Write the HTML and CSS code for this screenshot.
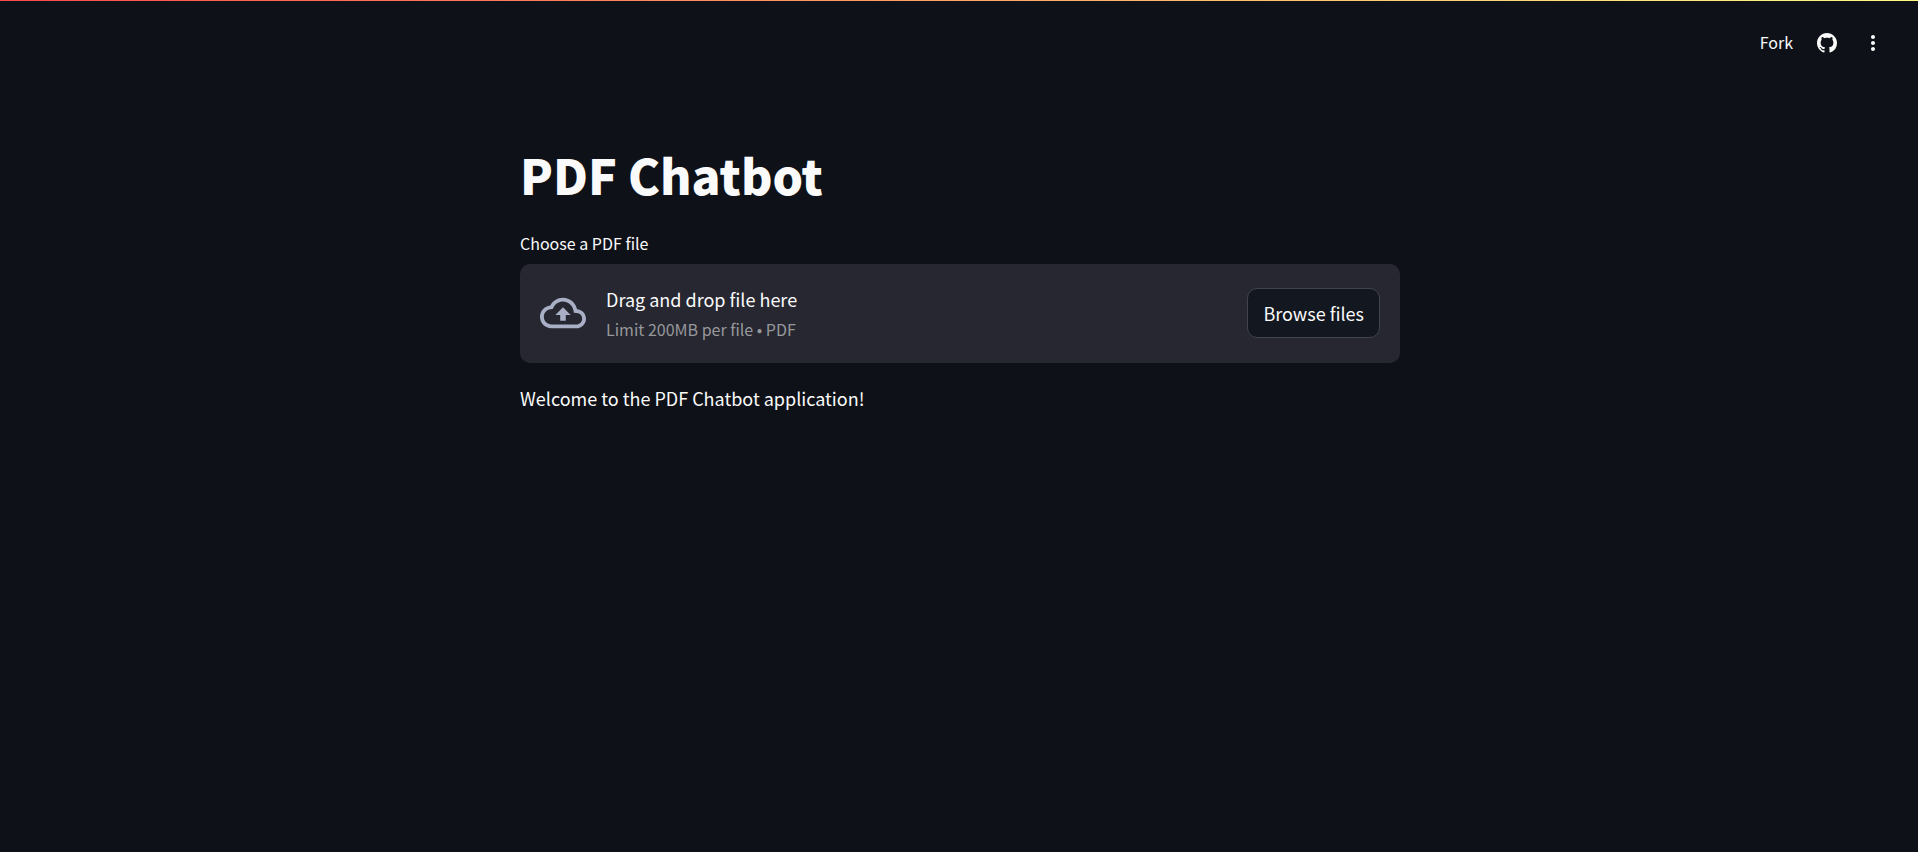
FILE: index.html
```html
<!DOCTYPE html>
<html lang="en">
<head>
<meta charset="utf-8">
<meta name="viewport" content="width=device-width, initial-scale=1">
<title>PDF Chatbot</title>
<link rel="stylesheet" href="styles.css">
</head>
<body>
<div class="decoration"></div>
<header class="toolbar">
  <button class="tool fork" type="button">Fork</button>
  <a class="tool" href="#" aria-label="View source on GitHub">
    <svg class="github" viewBox="0 0 16 16" fill="currentColor" aria-hidden="true"><path d="M8 0C3.58 0 0 3.58 0 8c0 3.54 2.29 6.53 5.47 7.59.4.07.55-.17.55-.38 0-.19-.01-.82-.01-1.49-2.01.37-2.53-.49-2.69-.94-.09-.23-.48-.94-.82-1.13-.28-.15-.68-.52-.01-.53.63-.01 1.08.58 1.23.82.72 1.21 1.87.87 2.33.66.07-.52.28-.87.51-1.07-1.78-.2-3.64-.89-3.64-3.95 0-.87.31-1.59.82-2.15-.08-.2-.36-1.02.08-2.12 0 0 .67-.21 2.2.82.64-.18 1.32-.27 2-.27s1.36.09 2 .27c1.53-1.04 2.2-.82 2.2-.82.44 1.1.16 1.92.08 2.12.51.56.82 1.27.82 2.15 0 3.07-1.87 3.75-3.65 3.95.29.25.54.73.54 1.48 0 1.07-.01 1.93-.01 2.2 0 .21.15.46.55.38A8.01 8.01 0 0 0 16 8c0-4.42-3.58-8-8-8z"/></svg>
  </a>
  <button class="tool" type="button" aria-label="Main menu">
    <svg class="dots" viewBox="0 0 24 24" fill="currentColor" aria-hidden="true"><path d="M12 8c1.1 0 2-.9 2-2s-.9-2-2-2-2 .9-2 2 .9 2 2 2zm0 2c-1.1 0-2 .9-2 2s.9 2 2 2 2-.9 2-2-.9-2-2-2zm0 6c-1.1 0-2 .9-2 2s.9 2 2 2 2-.9 2-2-.9-2-2-2z"/></svg>
  </button>
</header>
<main class="content">
  <h1 class="title">PDF Chatbot</h1>
  <label class="field-label" for="pdf-file">Choose a PDF file</label>
  <section class="dropzone">
    <input id="pdf-file" type="file" accept=".pdf" hidden>
    <svg class="cloud" viewBox="0 0 24 24" fill="currentColor" aria-hidden="true"><path d="M19.35 10.04C18.67 6.59 15.64 4 12 4 9.11 4 6.6 5.64 5.35 8.04 2.34 8.36 0 10.91 0 14c0 3.31 2.69 6 6 6h13c2.76 0 5-2.24 5-5 0-2.64-2.05-4.78-4.65-4.96zM19 18H6c-2.21 0-4-1.79-4-4 0-2.05 1.53-3.76 3.56-3.97l1.07-.11.5-.95C8.08 7.14 9.94 6 12 6c2.62 0 4.88 1.86 5.39 4.43l.3 1.5 1.53.11c1.56.1 2.78 1.41 2.78 2.96 0 1.65-1.35 3-3 3zM8 13h2.55v3h2.9v-3H16l-4-4z"/></svg>
    <div class="instructions">
      <span class="prompt">Drag and drop file here</span>
      <span class="limit">Limit 200MB per file • PDF</span>
    </div>
    <button class="browse" type="button">Browse files</button>
  </section>
  <p class="welcome">Welcome to the PDF Chatbot application!</p>
</main>
</body>
</html>
```

FILE: styles.css
```css
* {
  box-sizing: border-box;
}

body {
  margin: 0;
  background: #0e1117;
  color: #fafafa;
  font-family: "Noto Sans CJK JP", "Noto Sans", sans-serif;
  font-size: 18px;
  line-height: 30px;
}

button {
  font: inherit;
  color: inherit;
  cursor: pointer;
}

.decoration {
  height: 1px;
  background: linear-gradient(90deg, #ff4b4b, #fffd80);
}

.toolbar {
  display: flex;
  justify-content: flex-end;
  align-items: center;
  gap: 24px;
  padding: 27px 33px 0 0;
}

.tool {
  display: flex;
  padding: 0;
  border: 0;
  background: none;
  color: inherit;
  font-size: 16px;
  line-height: 28px;
}

.fork {
  padding-bottom: 2px;
}

.github {
  width: 20px;
  height: 20px;
}

.dots {
  width: 24px;
  height: 24px;
}

.content {
  max-width: 882px;
  margin: 0 auto;
  padding: 83px 0 0 2px;
}

.title {
  margin: 0;
  padding-bottom: 22px;
  font-size: 48px;
  font-weight: 900;
  line-height: 66px;
}

.field-label {
  display: block;
  padding-bottom: 7px;
  font-size: 16px;
  line-height: 28px;
}

.dropzone {
  display: flex;
  align-items: center;
  gap: 20px;
  padding: 19px 20px 20px;
  border-radius: 10px;
  background: #262730;
}

.cloud {
  width: 46px;
  height: 46px;
  color: #a9b0c6;
}

.instructions {
  display: flex;
  flex-direction: column;
  flex: 1;
}

.prompt {
  line-height: 32px;
}

.limit {
  color: #97989c;
  font-size: 16px;
  line-height: 28px;
}

.browse {
  padding: 9px 15px;
  border: 1px solid #41444c;
  border-radius: 10px;
  background: #131720;
}

.welcome {
  margin: 20px 0 0;
}
```
